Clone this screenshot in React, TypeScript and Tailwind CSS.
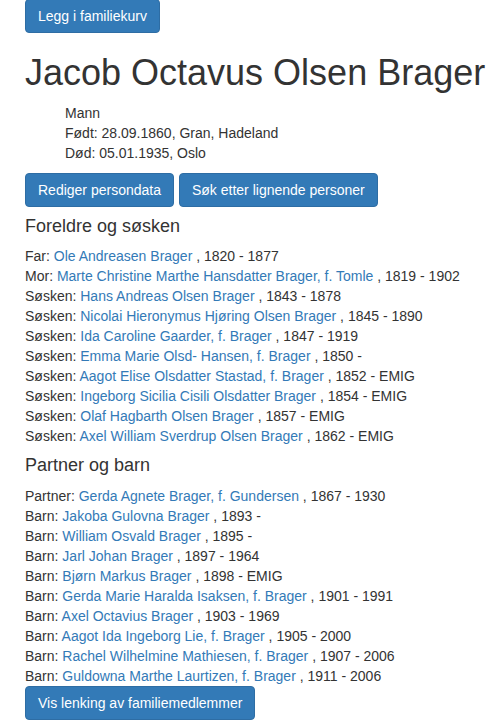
const parents: [string, string, string][] = [
  ['Far', 'Ole Andreasen Brager', '1820 - 1877'],
  ['Mor', 'Marte Christine Marthe Hansdatter Brager, f. Tomle', '1819 - 1902'],
  ['Søsken', 'Hans Andreas Olsen Brager', '1843 - 1878'],
  ['Søsken', 'Nicolai Hieronymus Hjøring Olsen Brager', '1845 - 1890'],
  ['Søsken', 'Ida Caroline Gaarder, f. Brager', '1847 - 1919'],
  ['Søsken', 'Emma Marie Olsd- Hansen, f. Brager', '1850 -'],
  ['Søsken', 'Aagot Elise Olsdatter Stastad, f. Brager', '1852 - EMIG'],
  ['Søsken', 'Ingeborg Sicilia Cisili Olsdatter Brager', '1854 - EMIG'],
  ['Søsken', 'Olaf Hagbarth Olsen Brager', '1857 - EMIG'],
  ['Søsken', 'Axel William Sverdrup Olsen Brager', '1862 - EMIG'],
];

const family: [string, string, string][] = [
  ['Partner', 'Gerda Agnete Brager, f. Gundersen', '1867 - 1930'],
  ['Barn', 'Jakoba Gulovna Brager', '1893 -'],
  ['Barn', 'William Osvald Brager', '1895 -'],
  ['Barn', 'Jarl Johan Brager', '1897 - 1964'],
  ['Barn', 'Bjørn Markus Brager', '1898 - EMIG'],
  ['Barn', 'Gerda Marie Haralda Isaksen, f. Brager', '1901 - 1991'],
  ['Barn', 'Axel Octavius Brager', '1903 - 1969'],
  ['Barn', 'Aagot Ida Ingeborg Lie, f. Brager', '1905 - 2000'],
  ['Barn', 'Rachel Wilhelmine Mathiesen, f. Brager', '1907 - 2006'],
  ['Barn', 'Guldowna Marthe Laurtizen, f. Brager', '1911 - 2006'],
];

function Btn({ children }: { children: React.ReactNode }) {
  return (
    <button className="inline-block px-3 py-[6px] text-[14px] leading-[20px] text-white bg-[#337ab7] border border-[#2e6da4] rounded-[4px] whitespace-nowrap">
      {children}
    </button>
  );
}

function Relations({ rows }: { rows: [string, string, string][] }) {
  return (
    <div>
      {rows.map(([role, name, years], i) => (
        <div key={i} className="whitespace-nowrap">
          {role}: <a href="#" className="text-[#337ab7]">{name}</a> , {years}
        </div>
      ))}
    </div>
  );
}

export default function App() {
  return (
    <div className="px-[25px] font-['Liberation_Sans',Arial,sans-serif] text-[14px] leading-[20px] text-[#333] bg-white min-h-[725px]">
      <div className="-mt-px">
        <Btn>Legg i familiekurv</Btn>
      </div>

      <h1 className="mt-5 mb-[10px] text-[36px] leading-[1.1] font-normal whitespace-nowrap">
        Jacob Octavus Olsen Brager
      </h1>

      {/* Persondata */}
      <div className="pl-10 mb-[10px]">
        <div>Mann</div>
        <div>Født: 28.09.1860, Gran, Hadeland</div>
        <div>Død: 05.01.1935, Oslo</div>
      </div>

      <div className="flex gap-[5px]">
        <Btn>Rediger persondata</Btn>
        <Btn>Søk etter lignende personer</Btn>
      </div>

      <h4 className="mt-[10px] mb-[10px] text-[18px] leading-[1.1]">Foreldre og søsken</h4>
      <Relations rows={parents} />

      <h4 className="mt-[10px] mb-[10px] text-[18px] leading-[1.1]">Partner og barn</h4>
      <Relations rows={family} />

      <Btn>Vis lenking av familiemedlemmer</Btn>
    </div>
  );
}
